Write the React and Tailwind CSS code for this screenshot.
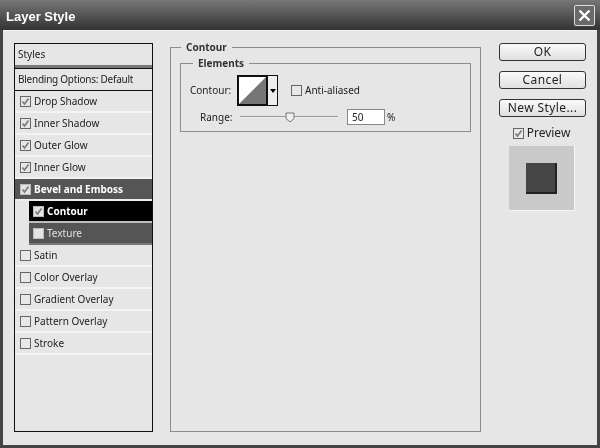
const font = "font-['Noto_Sans',sans-serif]"

const styles = [
  { label: 'Drop Shadow', checked: true },
  { label: 'Inner Shadow', checked: true },
  { label: 'Outer Glow', checked: true },
  { label: 'Inner Glow', checked: true },
  { label: 'Bevel and Emboss', checked: true, kind: 'group' },
  { label: 'Contour', checked: true, kind: 'active' },
  { label: 'Texture', checked: false, kind: 'child' },
  { label: 'Satin' },
  { label: 'Color Overlay' },
  { label: 'Gradient Overlay' },
  { label: 'Pattern Overlay' },
  { label: 'Stroke' },
]

function Checkbox({ checked, light }) {
  return (
    <span className={`flex h-[11px] w-[11px] shrink-0 items-center justify-center border ${light ? 'border-[#bbb] bg-[#e4e4e4]' : 'border-[#666] bg-[#e8e8e8]'}`}>
      {checked ? (
        <svg width="9" height="9" viewBox="0 0 9 9" fill="none">
          <path d="M1.5 4.5 L3.5 7 L7.5 1.5" stroke="#808080" strokeWidth="1.8" />
        </svg>
      ) : null}
    </span>
  )
}

function StyleRow({ label, checked, kind }) {
  if (kind === 'group') {
    return (
      <div className="flex h-[22px] items-center gap-[3px] border-b-2 border-[#efefef] bg-[#555] pl-[5px] text-[10px] font-bold text-white">
        <Checkbox checked={checked} light />
        {label}
      </div>
    )
  }
  if (kind === 'active' || kind === 'child') {
    return (
      <div className="flex h-[22px] pl-[14px]">
        <div className={`flex flex-1 items-center gap-[3px] border-b-2 pl-[4px] text-[10px] ${kind === 'active' ? 'border-[#bdbdbd] bg-black font-bold text-white' : 'border-[#777] bg-[#555] text-[#e0e0e0]'}`}>
          <Checkbox checked={checked} light />
          {label}
        </div>
      </div>
    )
  }
  return (
    <div className="flex h-[22px] items-center gap-[3px] border-b-2 border-[#f3f3f3] pl-[5px] text-[10px] text-[#222]">
      <Checkbox checked={checked} />
      {label}
    </div>
  )
}

function DialogButton({ children }) {
  return (
    <button type="button" className="block h-[18px] w-[87px] rounded-[3px] border border-[#333] bg-gradient-to-b from-[#fafafa] to-[#e0e0e0] text-[12px] leading-none tracking-[0.4px] text-[#222]">
      {children}
    </button>
  )
}

function Group({ title, className, legendClass, children }) {
  return (
    <fieldset className={`border border-[#8c8c8c] ${className}`}>
      <legend className={`px-[5px] text-[10px] leading-[13px] font-bold text-[#333] ${legendClass}`}>{title}</legend>
      {children}
    </fieldset>
  )
}

export default function App() {
  return (
    <div className={`flex h-[448px] w-[600px] flex-col overflow-hidden bg-[#444] blur-[0.3px] ${font}`}>
      <div className="flex h-[30px] shrink-0 items-center justify-between bg-gradient-to-b from-[#777] via-[#555] to-[#333] pr-[5px] pl-[6px]">
        <span className="pt-[3px] font-['Liberation_Sans',sans-serif] text-[13px] font-bold text-white">Layer Style</span>
        <span className="flex h-[21px] w-[21px] items-center justify-center rounded-[2px] border border-[#ddd] bg-[#6a6a6a]">
          <svg width="13" height="13" viewBox="0 0 13 13" fill="none">
            <path d="M1.5 1.5 L11.5 11.5 M11.5 1.5 L1.5 11.5" stroke="#fff" strokeWidth="2.4" />
          </svg>
        </span>
      </div>

      <div className="mr-[3px] mb-[3px] ml-[3px] flex min-h-0 flex-1 border-t border-[#f4f4f4] bg-[#e6e6e6] pt-[12px] pb-[15px] pl-[11px]">
        <div className="flex h-[389px] w-[139px] shrink-0 flex-col border border-[#111]">
          <div className="flex h-[24px] items-center border-b-[3px] border-[#777] pl-[3px] text-[10px] text-[#222]">Styles</div>
          <div className="flex h-[23px] items-center border-y border-[#111] pl-[3px] text-[10px] tracking-[-0.25px] text-[#222]">Blending Options: Default</div>
          {styles.map((style) => (
            <StyleRow key={style.label} {...style} />
          ))}
        </div>

        <Group title="Contour" legendClass="ml-[1px]" className="mt-[-2px] ml-[17px] h-[391px] w-[310px] px-[9px] pt-[3px]">
          <Group title="Elements" legendClass="ml-[3px]" className="h-[75px] w-[291px] pt-[5px] pl-[9px]">
            <div className="flex h-[31px] items-center text-[10px] text-[#222]">
              <span className="w-[47px]">Contour:</span>
              <span className="flex h-[31px] w-[41px]">
                <span className="block h-[31px] w-[31px] border-2 border-[#111] bg-white">
                  <svg width="27" height="27" viewBox="0 0 27 27" className="block">
                    <path d="M0 27 L27 0 L27 27 Z" fill="#777" />
                  </svg>
                </span>
                <span className="flex flex-1 items-center justify-center border-y border-r border-[#111] bg-[#eee]">
                  <span className="border-x-[3px] border-t-[4px] border-x-transparent border-t-black" />
                </span>
              </span>
              <span className="ml-[13px]"><Checkbox /></span>
              <span className="ml-[3px]">Anti-aliased</span>
            </div>
            <div className="mt-[3px] flex items-center text-[10px] text-[#222]">
              <span className="w-[50px] pl-[10px]">Range:</span>
              <span className="relative flex h-[16px] w-[98px] items-center">
                <span className="h-[2px] w-full border-t border-[#999] bg-[#eee]" />
                <svg width="10" height="11" viewBox="0 0 10 11" className="absolute top-[3px] left-[45px]">
                  <path d="M1 1 H9 V6.5 L5 10 L1 6.5 Z" fill="#eee" stroke="#777" />
                </svg>
              </span>
              <span className="ml-[9px] flex h-[16px] w-[38px] items-center border border-[#888] bg-white pl-[4px]">50</span>
              <span className="ml-[2px]">%</span>
            </div>
          </Group>
        </Group>

        <div className="ml-[18px] flex w-[87px] shrink-0 flex-col items-center">
          <DialogButton>OK</DialogButton>
          <div className="mt-[10px]"><DialogButton>Cancel</DialogButton></div>
          <div className="mt-[10px]"><DialogButton>New Style...</DialogButton></div>
          <div className="mt-[9px] mr-[2px] flex items-center gap-[3px] text-[12px] leading-[14px] text-[#222]">
            <Checkbox checked />
            Preview
          </div>
          <div className="mt-[6px] mr-[2px] flex h-[65px] w-[66px] items-center justify-center border-r border-b border-[#f6f6f6] bg-[#c9c9c9]">
            <div className="h-[31px] w-[31px] border-r-2 border-b-2 border-[#222] bg-[#454545]" />
          </div>
        </div>
      </div>
    </div>
  )
}
